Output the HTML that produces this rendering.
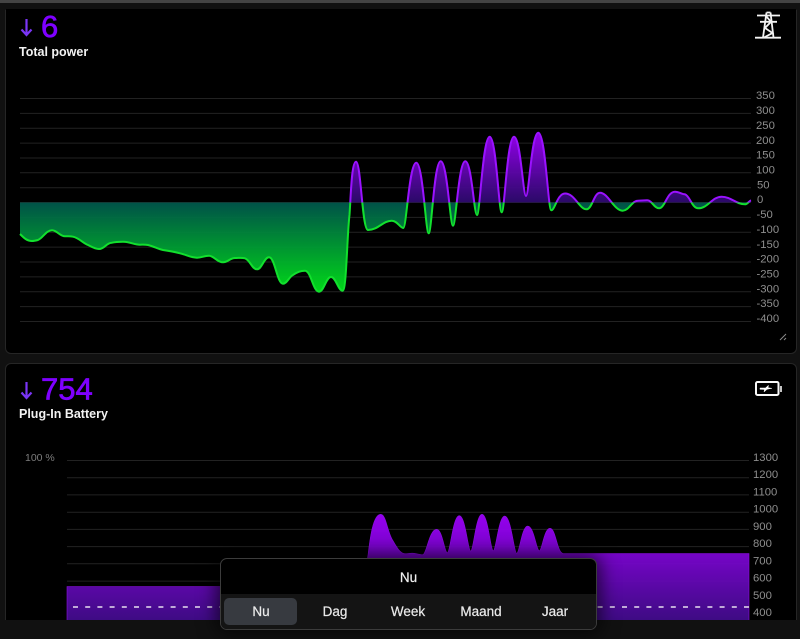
<!DOCTYPE html>
<html>
<head>
<meta charset="utf-8">
<style>
html,body{margin:0;padding:0;width:800px;height:639px;overflow:hidden;background:#111;font-family:"Liberation Sans",sans-serif}
#wrap{position:absolute;left:0;top:0;width:800px;height:639px;overflow:hidden;background:#111}
#top{position:absolute;left:0;top:0;width:800px;height:3px;background:#444}
.card{position:absolute;left:5px;width:792px;background:#000;border:1px solid #262626;box-sizing:border-box}
#c1{top:9px;height:345px;border-radius:0 0 6px 6px;border-top-color:#000}
#c2{top:363px;height:257px;border-radius:6px 6px 0 0;border-bottom:0}
svg{position:absolute;left:0;top:0}
#pop{position:absolute;left:220px;top:558px;width:377px;height:72px;box-sizing:border-box;background:#000;border:1px solid #3c3c3c;border-radius:7px;box-shadow:0 0 18px 4px rgba(0,0,0,.65);overflow:hidden}
#pt{position:absolute;left:0;right:0;top:11px;text-align:center;color:#eee;font-size:13.5px;line-height:16px;-webkit-text-stroke:.2px #eee}
#pb{position:absolute;left:0;right:0;top:35px;bottom:0;background:#141414}
#act{position:absolute;left:3px;top:4px;width:73px;height:27px;background:#373a40;border-radius:5px}
.t{position:absolute;top:10px;width:74px;text-align:center;color:#eaeaea;font-size:13.5px;line-height:16px;-webkit-text-stroke:.2px #eaeaea}
</style>
</head>
<body>
<div id="wrap">
<div id="top"></div>
<div class="card" id="c1"></div>
<div class="card" id="c2"></div>
<svg width="800" height="639" viewBox="0 0 800 639">
<defs>
<linearGradient id="gP" gradientUnits="userSpaceOnUse" x1="0" y1="132" x2="0" y2="203"><stop offset="0" stop-color="#9c00f8"/><stop offset="1" stop-color="#2c0a6c"/></linearGradient>
<linearGradient id="gG" gradientUnits="userSpaceOnUse" x1="0" y1="203" x2="0" y2="292"><stop offset="0" stop-color="#00574c"/><stop offset="1" stop-color="#00e31a"/></linearGradient>
<linearGradient id="gB" gradientUnits="userSpaceOnUse" x1="0" y1="514" x2="0" y2="620"><stop offset="0" stop-color="#a000ff"/><stop offset="1" stop-color="#420c8c"/></linearGradient>
<clipPath id="cu"><rect x="0" y="100" width="800" height="102.5"/></clipPath>
<clipPath id="cd"><rect x="0" y="202.5" width="800" height="120"/></clipPath>
<clipPath id="cb"><rect x="0" y="400" width="800" height="220"/></clipPath>
<path id="line1" d="M20 234C24 238 27 241 32 241C34 241 36 240.500 38 240C43 238 46 230.300 52 230.300C57 230.300 60 236.300 65 236.300C68 236.300 70 236 73 236.700C79 238 83 243 88 245C92 247 95 249 99 249C105 249 106 242.700 112 242.700C116 241.700 119 241.700 123 241.700C130 241.700 134 244.700 140 244.700C143 244.700 145 244.500 148 245C154 246.500 158 249 163 250C170 251 175 252 180 253.300C187 255 191 257.700 197 257.700C202 257.700 204 255.700 209 255.700C214 255.700 217 262.300 223 262.300C228 262.300 230 258 235 258C239 258 242 257.500 245 258.300C250 260 252 269.300 257 269.300C262 269.300 264 257.300 269 257.300C275 257.300 277 283.700 283 283.700C287 283.700 289 277 293 275C297 272 301 270.700 305 270.700C311 270.700 313 291.700 319 291.700C324 291.700 326 277 331 277C336 277 338 290.700 342.700 290.700C346.500 290.700 347 235 349.500 215C350.800 197 351.500 161.700 356 161.700C361 161.700 362 230 368 230C378 230 383 220.700 391.700 220.700C397.500 220.700 400 228 403.300 228C406.500 228 409.200 162.700 416.300 162.700C423 162.700 425.600 233.300 428.700 233.300C431.700 233.300 434 161.300 440.700 161.300C447.400 161.300 450 225.700 453 225.700C456 225.700 458.500 161.300 465.300 161.300C471.700 161.300 474 215 477 215C480 215 482.700 136.700 489.700 136.700C496.300 136.700 498.700 212.300 501.700 212.300C504.700 212.300 507.200 136.700 514 136.700C520.600 136.700 523 196 526 196C529 196 531.500 132.700 538.300 132.700C545.500 132.700 548 210.300 551.300 210.300C554.800 210.300 557.500 193.500 565 193.500C575 193.500 579 209.300 586.700 209.300C592 209.300 594 192.700 600 192.700C608 192.700 614 210.700 622.700 210.700C629 210.700 632 200.700 638 200.700C641 200.700 644 200.300 647.300 200.300C652 200.300 654 208.300 659 208.300C665 208.300 667 191.700 675 191.700C679 191.700 682 194.300 685 194.300C690 196 692 208.300 698.300 208.300C708 208.300 712 196.700 721.700 196.700C731 196.700 736 204.300 745 204.300C747.500 204.300 749 201 751 200.300"/>
<path id="area1" d="M20 234C24 238 27 241 32 241C34 241 36 240.500 38 240C43 238 46 230.300 52 230.300C57 230.300 60 236.300 65 236.300C68 236.300 70 236 73 236.700C79 238 83 243 88 245C92 247 95 249 99 249C105 249 106 242.700 112 242.700C116 241.700 119 241.700 123 241.700C130 241.700 134 244.700 140 244.700C143 244.700 145 244.500 148 245C154 246.500 158 249 163 250C170 251 175 252 180 253.300C187 255 191 257.700 197 257.700C202 257.700 204 255.700 209 255.700C214 255.700 217 262.300 223 262.300C228 262.300 230 258 235 258C239 258 242 257.500 245 258.300C250 260 252 269.300 257 269.300C262 269.300 264 257.300 269 257.300C275 257.300 277 283.700 283 283.700C287 283.700 289 277 293 275C297 272 301 270.700 305 270.700C311 270.700 313 291.700 319 291.700C324 291.700 326 277 331 277C336 277 338 290.700 342.700 290.700C346.500 290.700 347 235 349.500 215C350.800 197 351.500 161.700 356 161.700C361 161.700 362 230 368 230C378 230 383 220.700 391.700 220.700C397.500 220.700 400 228 403.300 228C406.500 228 409.200 162.700 416.300 162.700C423 162.700 425.600 233.300 428.700 233.300C431.700 233.300 434 161.300 440.700 161.300C447.400 161.300 450 225.700 453 225.700C456 225.700 458.500 161.300 465.300 161.300C471.700 161.300 474 215 477 215C480 215 482.700 136.700 489.700 136.700C496.300 136.700 498.700 212.300 501.700 212.300C504.700 212.300 507.200 136.700 514 136.700C520.600 136.700 523 196 526 196C529 196 531.500 132.700 538.300 132.700C545.500 132.700 548 210.300 551.300 210.300C554.800 210.300 557.500 193.500 565 193.500C575 193.500 579 209.300 586.700 209.300C592 209.300 594 192.700 600 192.700C608 192.700 614 210.700 622.700 210.700C629 210.700 632 200.700 638 200.700C641 200.700 644 200.300 647.300 200.300C652 200.300 654 208.300 659 208.300C665 208.300 667 191.700 675 191.700C679 191.700 682 194.300 685 194.300C690 196 692 208.300 698.300 208.300C708 208.300 712 196.700 721.700 196.700C731 196.700 736 204.300 745 204.300C747.500 204.300 749 201 751 200.300L751 202.500L20 202.500Z"/>
</defs>
<g stroke="#222" stroke-width="1">
<path d="M20 98.500H751M20 113.400H751M20 128.200H751M20 143.100H751M20 158H751M20 172.800H751M20 187.700H751M20 202.500H751M20 217.400H751M20 232.300H751M20 247.100H751M20 262H751M20 276.900H751M20 291.700H751M20 306.600H751M20 321.500H751"/>
<path d="M67 460.500H749M67 477.700H749M67 494.900H749M67 512.200H749M67 529.400H749M67 546.600H749M67 563.800H749M67 581.100H749"/>
</g>
<g fill="#8e8e8e" font-size="11.300" font-family="Liberation Sans, sans-serif">
<text x="756" y="99">350</text><text x="756" y="114">300</text><text x="756" y="129">250</text><text x="756" y="144">200</text><text x="756" y="158.500">150</text><text x="756" y="173.500">100</text><text x="757" y="188.500">50</text><text x="757" y="203">0</text><text x="756.500" y="218">-50</text><text x="756.500" y="233">-100</text><text x="756.500" y="248">-150</text><text x="756.500" y="262.500">-200</text><text x="756.500" y="277.500">-250</text><text x="756.500" y="292.500">-300</text><text x="756.500" y="307">-350</text><text x="756.500" y="322">-400</text>
<text x="753" y="461">1300</text><text x="753" y="478.200">1200</text><text x="753" y="495.400">1100</text><text x="753" y="512.700">1000</text><text x="753" y="529.900">900</text><text x="753" y="547.100">800</text><text x="753" y="564.300">700</text><text x="753" y="581.600">600</text><text x="753" y="598.800">500</text><text x="753" y="616">400</text>
<text x="25" y="461" fill="#7c7c7c" font-size="10.500">100 %</text>
</g>

<!-- chart 1 -->
<use href="#area1" clip-path="url(#cu)" fill="url(#gP)" fill-opacity=".95"/>
<use href="#area1" clip-path="url(#cd)" fill="url(#gG)" fill-opacity=".95"/>
<use href="#line1" clip-path="url(#cu)" fill="none" stroke="#9a12ff" stroke-width="2"/>
<use href="#line1" clip-path="url(#cd)" fill="none" stroke="#12e02e" stroke-width="2"/>

<!-- chart 2 fill -->
<path clip-path="url(#cb)" fill="url(#gB)" fill-opacity=".94" stroke="#8a10e0" stroke-width=".6" d="M67 586.500L362 586.500C365 586.500 366 566 368 555C370 538 373 514.300 380.700 514.300C386 514.300 387 530 392 539C396 546 400 553.700 405 553.700C408 553.500 411 553 414 553.300C417 553.600 420 554.700 422.700 554.700C426.500 554.700 429 529.300 436.700 529.300C442.500 529.300 444.500 552.700 447.300 552.700C450.300 552.700 452.700 515.700 459.300 515.700C465.600 515.700 468 551 470.700 551C473.500 551 475.800 514.300 482 514.300C488.200 514.300 490.500 550.700 493.300 550.700C496 550.700 498.500 516 504.700 516C511.300 516 514 553.300 516.700 553.300C519.500 553.300 521.700 526 527.700 526C534 526 536.400 550.700 539.300 550.700C542 550.700 544 528.300 550 528.300C556 528.300 557 553.300 563.300 553.500L749 553.500L749 625L67 625Z"/>
<path d="M73 607H749" stroke="#e8e0f0" stroke-width="1.500" stroke-dasharray="5 7.200" fill="none"/>

<!-- resize handle -->
<path d="M780 340L786 334M784 340L786 338" stroke="#8a8a8a" stroke-width="1" fill="none"/>

<!-- headers -->
<path d="M26.500 19V35M21.500 29.500L26.500 35L31.500 29.500" fill="none" stroke="#7a35f5" stroke-width="2.200"/>
<text x="41" y="37" font-size="31" fill="#7f00ff" stroke="#7f00ff" stroke-width=".7" font-family="Liberation Sans, sans-serif">6</text>
<text x="19" y="56" font-size="12.500" font-weight="700" fill="#f2f2f2" font-family="Liberation Sans, sans-serif">Total power</text>
<path d="M26.500 382V398M21.500 392.500L26.500 398L31.500 392.500" fill="none" stroke="#7a35f5" stroke-width="2.200"/>
<text x="41" y="399.500" font-size="31" fill="#7f00ff" stroke="#7f00ff" stroke-width=".7" font-family="Liberation Sans, sans-serif">754</text>
<text x="19" y="418" font-size="12.500" font-weight="700" fill="#f2f2f2" font-family="Liberation Sans, sans-serif">Plug-In Battery</text>

<!-- tower icon -->
<g fill="none" stroke="#f4f4f4" stroke-width="1.800">
<path d="M757 15.500H780M760 21.800H777M755 37.700H781"/>
<path d="M766.500 12.500H770.500M766.500 12.500L763 37.500M770.500 12.500L773.500 37.500M766 16L771 21.800L765 28L772.500 33L764 37.500"/>
</g>
<!-- battery icon -->
<rect x="756" y="382" width="22.500" height="13" rx="1.500" fill="none" stroke="#f8f8f8" stroke-width="2"/>
<rect x="780" y="386" width="2" height="6" fill="#c4c4c4"/>
<path d="M760 388L765.500 388L768.500 385.300L768 387.800L772 388.300L767 389.300L764 392L764.500 389.500L760 389.300Z" fill="#fff" stroke="#fff" stroke-width=".5"/>
</svg>
<div id="pop">
  <div id="pt">Nu</div>
  <div id="pb">
    <div id="act"></div>
    <div class="t" style="left:3px">Nu</div>
    <div class="t" style="left:77px">Dag</div>
    <div class="t" style="left:150px">Week</div>
    <div class="t" style="left:223px">Maand</div>
    <div class="t" style="left:297px">Jaar</div>
  </div>
</div>
</div>
</body>
</html>
